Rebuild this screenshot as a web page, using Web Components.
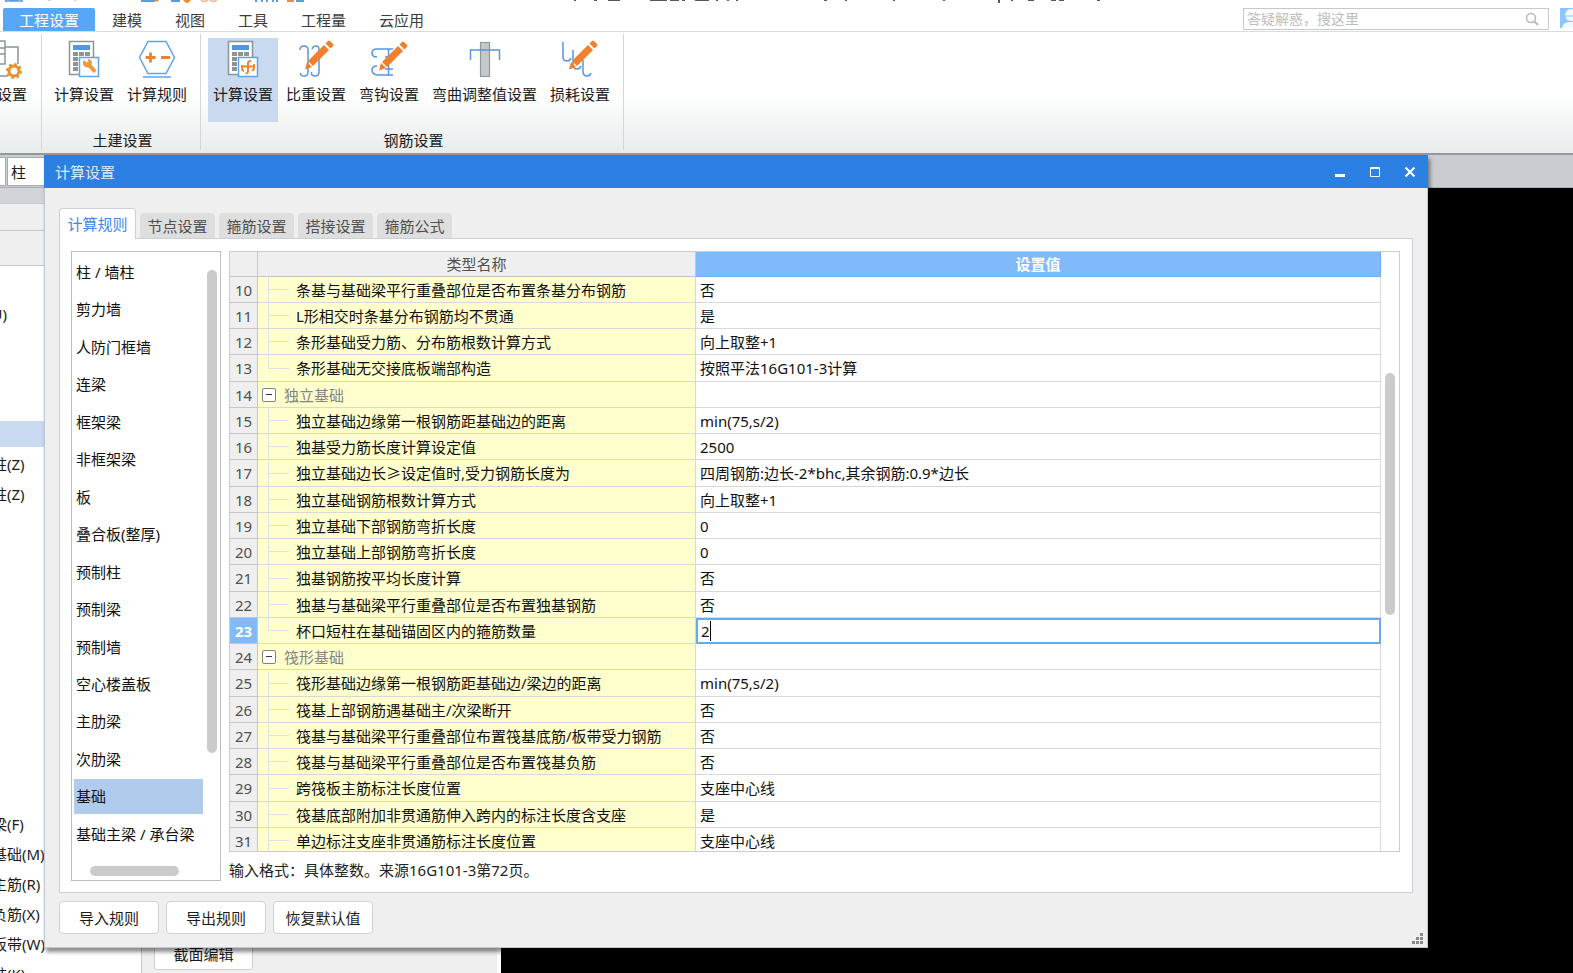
<!DOCTYPE html>
<html lang="zh-CN">
<head>
<meta charset="utf-8">
<title>计算设置</title>
<style>
  html, body { margin: 0; height: 100%; }
  body {
    font: 15px/20px "Noto Sans", "Noto Sans CJK SC", sans-serif;
    color: #1c1c1c;
    overflow: hidden;
  }
</style>
</head>
<body>
<cost-app></cost-app>
<script>
const RESET = `
  *, *::before, *::after { box-sizing: border-box; }
  button, input { font: inherit; color: inherit; margin: 0; padding: 0; border: 0; background: none; }
  button { cursor: pointer; white-space: nowrap; }
  ul { list-style: none; margin: 0; padding: 0; }
  svg { display: block; }
`;

function define(name, css, html) {
  const template = document.createElement('template');
  template.innerHTML = `<style>${RESET}${css}</style>`;
  customElements.define(name, class extends HTMLElement {
    constructor() {
      super();
      this.attachShadow({ mode: 'open' });
      this.shadowRoot.append(template.content.cloneNode(true));
    }
    connectedCallback() {
      if (this.ready) return;
      this.ready = true;
      const body = document.createElement('template');
      body.innerHTML = typeof html === 'function' ? html(this) : html;
      this.shadowRoot.append(body.content);
    }
  });
}

/* ---------- icons ---------- */
const calculator = `
  <path d="M5.500 1.500h24v33h-24z" fill="#fff" stroke="#8a9499" stroke-width="1.5"/>
  <path d="M9 5h17v5H9z" fill="#5596e0"/>
  <path d="M9 12h5v4H9zM15 12h5v4h-5zM21 12h5v4h-5zM9 17h5v4H9zM9 22h5v4H9zM9 27h5v4H9z" fill="#8a9499"/>
  <path d="M15.500 17.500h19v19h-19z" fill="#fff" stroke="#5fa3ea" stroke-width="1.5"/>`;
const pencil = `
  <g fill="#f07f2e"><path d="M24 5l5 5-16 16-5-5z"/><path d="M25.5 3.500l2.500-2.500q1-1 2 0l3 3q1 1 0 2l-2.500 2.500z"/><path d="M7 22l5 5-7 2.500z"/></g>`;
const ICONS = {
  project: `<g fill="none" stroke="#8a9499" stroke-width="1.500"><path d="M6 36h10M13 7h13v17M6 1h7v23H6M6 8h7M6 14h7"/></g>
    <circle cx="22" cy="31" r="5" fill="#fff" stroke="#e8902f" stroke-width="3"/>
    <circle cx="22" cy="31" r="7" fill="none" stroke="#e8902f" stroke-width="2" stroke-dasharray="2.700 2.800"/>`,
  wrench: calculator + `<path d="M19 22q0-2 1.500-1.500l2 2 2-1-1-2.500q4 0 4.500 3.500l-.5 2 5 6-2.500 2.500-5.500-5.500q-4 .5-5.500-3z" fill="#ee9a3c"/>`,
  rule: `<path d="M11 1.500h18l8.500 16-8.500 16H11l-8.500-16z" fill="#fff" stroke="#5fa3ea" stroke-width="1.500"/>
    <path d="M8.500 17.500h10M13.500 12.500v10M24 17.500h9" stroke="#f07f2e" stroke-width="2.800"/>
    <path d="M6 37h28" stroke="#5fa3ea" stroke-width="1.500"/>`,
  hook: calculator + `<path d="M19 26.500h12M25 22v9q0 2.500-2.500 2.500M25 23q0-2 3-2M19 25v3q0 2.500 2 3M31 24v4q0 2-2 2.500" fill="none" stroke="#f0862e" stroke-width="2"/>`,
  weight: `<path d="M4 10q0-4 4-4t4 4v22q0 4-4 4t-3.500-3M16 9q1-3 4-3t3 4v22q0 4-4 4t-3.500-4" fill="none" stroke="#5596e0" stroke-width="1.500"/>` + `<g transform="translate(4 0)">${pencil}</g>`,
  bend: `<path d="M8 17q-5 0-5-4t5-4h16M8 26q-5 0-5 4t5 5h16M19.500 9v26M16 17h8M16 29h8" fill="none" stroke="#5596e0" stroke-width="1.500"/>` + `<g transform="translate(5 1)">${pencil}</g>`,
  adjust: `<path d="M15.500 2.500h9v34h-9z" fill="#c3c8cb" stroke="#8d989c" stroke-width="1.200"/><path d="M5.500 20v-10h29v10" fill="none" stroke="#5596e0" stroke-width="1.500"/>`,
  loss: `<path d="M3 2v15q0 4 4 4 3 0 4-3M13 10v15q0 4 4 4 3 0 4-3M23 20v11q0 5 4 5 3 0 4-3" fill="none" stroke="#5596e0" stroke-width="1.500"/>` + `<g transform="translate(4 0)">${pencil}</g>`
};

/* ---------- top of the window ---------- */
define('quick-access', `
  :host { display: block; height: 8px; overflow: hidden; background: #fff; }
`, `
  <svg width="1200" height="5" viewBox="0 0 1200 5" aria-hidden="true">
    <path d="M5 1h17M6 0v2M22 0v2M9 .5h9" stroke="#5a9be4" stroke-width="1.500"/>
    <path d="M48 0h3M74 0h2" stroke="#9aa9bb" stroke-width="1"/>
    <path d="M141 1h14M171 1h9M256 0v2M262 0v2M267 0v2M273 0v2M277 0v2M296 1h8" stroke="#5a9be4" stroke-width="2"/>
    <path d="M154 0h5l-2 2zM183 0h8l-3 3h-2zM287 0h7v2h-7z" fill="#f08a2c"/>
    <path d="M201 0q3 3 7 0M210 0q3 3 7 0" fill="none" stroke="#f3b38a" stroke-width="1.500"/>
    <path d="M575 0v1M594 0h3M608 0h12M650 0h17M670 0h9M682 0h3M695 0h14M717 0v1M728 0v1M737 0v1M824 0h3M845 0h2M893 0h2M943 0h2M999 0v3M1011 0h2M1028 0h6M1051 0h5M1059 0h5M1097 0h3" stroke="#222" stroke-width="1.500"/>
  </svg>`);

define('ribbon-tabs', `
  :host { display: flex; height: 24px; align-items: stretch; border-bottom: 1px solid #dcdcdc; background: #fff; }
  nav { display: flex; gap: 1px; margin-left: 3px; flex: 1; }
  button { padding: 0 16px; color: #3c3c3c; }
  button[aria-selected=true] { background: #57a7f9; color: #fff; border-radius: 2px 2px 0 0; }
  label { display: flex; align-items: center; width: 306px; height: 22px; margin-right: 11px; border: 1px solid #c8c8c8; padding: 0 9px 0 3px; }
  input { flex: 1; min-width: 0; font-size: 14px; outline: 0; }
  input::placeholder { color: #bdbdbd; opacity: 1; }
`, `
  <nav role="tablist">
    ${['工程设置', '建模', '视图', '工具', '工程量', '云应用'].map((t, i) => `<button role="tab" aria-selected="${i === 0}">${t}</button>`).join('')}
  </nav>
  <label>
    <input type="text" aria-label="搜索" placeholder="答疑解惑，搜这里">
    <svg width="14" height="14" viewBox="0 0 14 14" fill="none" stroke="#b8b8b8"><circle cx="6" cy="6" r="4.500" stroke-width="1.500"/><path d="M9 9l4 4" stroke-width="2"/></svg>
  </label>
  <svg width="13" height="21" viewBox="0 0 13 21" aria-hidden="true"><path d="M0 0h13v20H0z" fill="#8ec5fb"/><circle cx="11" cy="7" r="6" fill="#f2f8ff"/><path d="M2 20q1-6 7-6h4v6z" fill="#f2f8ff"/><path d="M5 8h8" stroke="#8ec5fb"/></svg>`);

define('tool-button', `
  :host { display: block; }
  button { display: flex; flex-direction: column; align-items: center; height: 84px; padding: 2px 5px 0; gap: 4px; }
  :host([active]) button { background: #c9d9ef; }
`, el => `<button><svg width="40" height="40" viewBox="0 0 40 40">${ICONS[el.getAttribute('icon')]}</svg><span><slot></slot></span></button>`);

define('ribbon-group', `
  :host { display: flex; flex-direction: column; border-right: 1px solid #d3d6d8; padding: 0 8px 0 7px; margin: 2px 0 3px; }
  .tools { display: flex; gap: 3px; flex: 1; padding-top: 4px; }
  .title { text-align: center; padding-left: 4px; }
`, el => `<div class="tools"><slot></slot></div><div class="title">${el.getAttribute('label')}</div>`);

define('ribbon-panel', `
  :host { display: flex; height: 123px; background: linear-gradient(#fff 50%, #e8ecec); border-bottom: 2px solid #94989b; }
  .clipped { width: 42px; margin: 2px 0 3px; border-right: 1px solid #d3d6d8; overflow: hidden; }
  .clipped tool-button { padding-top: 4px; margin-left: -13px; }
`, `
  <div class="clipped"><tool-button icon="project">设置</tool-button></div>
  <ribbon-group label="土建设置">
    <tool-button icon="wrench">计算设置</tool-button>
    <tool-button icon="rule">计算规则</tool-button>
  </ribbon-group>
  <ribbon-group label="钢筋设置">
    <tool-button icon="hook" active>计算设置</tool-button>
    <tool-button icon="weight">比重设置</tool-button>
    <tool-button icon="bend">弯钩设置</tool-button>
    <tool-button icon="adjust">弯曲调整值设置</tool-button>
    <tool-button icon="loss">损耗设置</tool-button>
  </ribbon-group>`);

/* ---------- workspace behind the dialog ---------- */
define('component-tree', `
  :host { display: flex; flex-direction: column; width: 142px; background: #fff; border-right: 1px solid #c4c8cc; overflow: hidden; }
  .bar { flex: none; background: #efefef; border-bottom: 1px solid #c4c8cc; }
  .top { height: 16px; background: #d2d4d9; }
  .mid { height: 27px; }
  .low { height: 35px; margin-bottom: 33px; }
  ul { flex: 1; min-height: 0; overflow: hidden; }
  li { display: flex; align-items: center; height: 30px; white-space: nowrap; }
  li span { margin-left: -8px; }
  li:first-child span { margin-left: -13px; }
  .on { height: 26px; margin: 2px 0; background: #c9d9ef; }
`, () => {
  const items = ['(U)', '', '', '', '#', '柱(Z)', '柱(Z)', '', '', '', '', '', '', '', '', '', '', '梁(F)', '基础(M)', '主筋(R)', '负筋(X)', '板带(W)', '柱(K)'];
  return `<div class="bar top"></div><div class="bar mid"></div><div class="bar low"></div>
    <ul>${items.map(t => t === '#' ? '<li class="on"></li>' : `<li><span>${t}</span></li>`).join('')}</ul>`;
});

define('work-space', `
  :host { display: flex; flex-direction: column; flex: 1; min-height: 0; }
  .strip { display: flex; flex: none; height: 33px; background: #c9ccd1; border-bottom: 1px solid #a8abb0; }
  .box { background: #fff; border: 1px solid #a8abb0; border-left: 0; width: 6px; margin: 2px 0 1px; }
  .type { width: 130px; margin-left: 1px; border-left: 1px solid #a8abb0; padding: 4px 3px; }
  .main { display: flex; flex: 1; min-height: 0; background: #000; }
  .props { display: flex; align-items: flex-end; width: 359px; background: #efefef; border-right: 4px solid #fff; padding: 0 0 3px 12px; }
  .props button { width: 99px; height: 32px; background: #fff; border: 1px solid #cfcfcf; border-radius: 3px; }
`, `
  <div class="strip"><div class="box"></div><div class="box type">柱</div></div>
  <div class="main">
    <component-tree></component-tree>
    <div class="props"><button>截面编辑</button></div>
  </div>`);

/* ---------- dialog ---------- */
define('category-list', `
  :host { display: flex; flex-direction: column; width: 150px; border: 1px solid #bdbdbd; background: #fff; padding: 3px 3px 3px 2px; }
  .body { display: flex; flex: 1; min-height: 0; justify-content: space-between; }
  ul { display: flex; flex-direction: column; justify-content: space-between; width: 129px; }
  li { height: 35px; padding: 7px 2px; white-space: nowrap; color: #111; }
  li[aria-selected=true] { background: #b1cbec; }
  .v { width: 10px; margin: 15px 0 99px; border-radius: 5px; background: #cbcbcb; }
  .h { width: 89px; height: 10px; margin: 14px 0 1px 16px; border-radius: 5px; background: #cbcbcb; }
`, () => {
  const names = ['柱 / 墙柱', '剪力墙', '人防门框墙', '连梁', '框架梁', '非框架梁', '板', '叠合板(整厚)', '预制柱', '预制梁', '预制墙', '空心楼盖板', '主肋梁', '次肋梁', '基础', '基础主梁 / 承台梁'];
  return `<div class="body"><ul role="listbox">${names.map(n => `<li role="option" aria-selected="${n === '基础'}">${n}</li>`).join('')}</ul><div class="v"></div></div><div class="h"></div>`;
});

const ROWS = [
  [10, '条基与基础梁平行重叠部位是否布置条基分布钢筋', '否'],
  [11, 'L形相交时条基分布钢筋均不贯通', '是'],
  [12, '条形基础受力筋、分布筋根数计算方式', '向上取整+1'],
  [13, '条形基础无交接底板端部构造', '按照平法16G101-3计算', 'last'],
  [14, '独立基础', '', 'group'],
  [15, '独立基础边缘第一根钢筋距基础边的距离', 'min(75,s/2)'],
  [16, '独基受力筋长度计算设定值', '2500'],
  [17, '独立基础边长≥设定值时,受力钢筋长度为', '四周钢筋:边长-2*bhc,其余钢筋:0.9*边长'],
  [18, '独立基础钢筋根数计算方式', '向上取整+1'],
  [19, '独立基础下部钢筋弯折长度', '0'],
  [20, '独立基础上部钢筋弯折长度', '0'],
  [21, '独基钢筋按平均长度计算', '否'],
  [22, '独基与基础梁平行重叠部位是否布置独基钢筋', '否'],
  [23, '杯口短柱在基础锚固区内的箍筋数量', '2', 'last edit'],
  [24, '筏形基础', '', 'group'],
  [25, '筏形基础边缘第一根钢筋距基础边/梁边的距离', 'min(75,s/2)'],
  [26, '筏基上部钢筋遇基础主/次梁断开', '否'],
  [27, '筏基与基础梁平行重叠部位布置筏基底筋/板带受力钢筋', '否'],
  [28, '筏基与基础梁平行重叠部位是否布置筏基负筋', '否'],
  [29, '跨筏板主筋标注长度位置', '支座中心线'],
  [30, '筏基底部附加非贯通筋伸入跨内的标注长度含支座', '是'],
  [31, '单边标注支座非贯通筋标注长度位置', '支座中心线']
];

define('rule-table', `
  :host { display: flex; align-items: flex-start; border: 1px solid #cdcdcd; background: #fff; overflow: hidden; }
  table { flex: 1; width: 0; table-layout: fixed; border-collapse: separate; border-spacing: 0; }
  th, td { padding: 0; border: 0 solid #d8d8d8; border-width: 0 1px 1px 0; height: 26px; font-weight: 400; text-align: left; white-space: nowrap; overflow: hidden; }
  tbody tr:nth-child(4n) > * { height: 27px; }
  thead th { height: 25px; background: #efefef; color: #505050; text-align: center; border-color: #c6c6c6; }
  thead .set { background: #80bafa; color: #fff; font-weight: 700; border-color: #6caef4; }
  tbody th { background: #efefef; color: #505050; text-align: center; border-color: #c6c6c6; }
  .name { background: #feffcc; color: #111; }
  .val { padding-left: 4px; color: #111; }
  .edit th { background: #80bafa; color: #fff; font-weight: 700; }
  .cell { display: flex; align-items: center; height: 25px; }
  .guide { display: grid; grid-template-rows: 13px 12px; align-self: stretch; width: 21px; margin: 0 7px 0 10px; }
  .guide i { border-left: 1px solid #dfdfe4; }
  .guide i:first-child { border-bottom: 1px solid #dfdfe4; }
  .last .guide i:last-child { border: 0; }
  .group .name { color: #848484; }
  .toggle { display: grid; place-items: center; width: 14px; height: 14px; margin: 0 8px 0 4px; background: #fff; border: 1px solid #808080; border-radius: 2px; }
  .toggle::before { content: ""; width: 6px; height: 1px; background: #333; }
  .edit .val { padding: 0; border: 0; }
  .edit input { display: block; width: 100%; height: 26px; border: 2px solid #68aaea; padding: 0 3px; outline: 0; background: linear-gradient(#000, #000) 12px center / 1px 20px no-repeat; }
  .bar { width: 10px; height: 242px; margin: 121px 4px 0; border-radius: 5px; background: #cbcbcb; }
`, () => `
  <table>
    <colgroup><col style="width:28px"><col style="width:438px"><col></colgroup>
    <thead><tr><th></th><th scope="col">类型名称</th><th scope="col" class="set">设置值</th></tr></thead>
    <tbody>${ROWS.map(([n, name, val, cls = '']) => `
      <tr class="${cls}"><th scope="row">${n}</th>
        <td class="name"><div class="cell">${cls === 'group' ? '<button class="toggle" aria-label="折叠"></button>' : '<span class="guide"><i></i><i></i></span>'}<span>${name}</span></div></td>
        <td class="val">${cls.includes('edit') ? `<input type="text" aria-label="${name}" value="${val}">` : val}</td></tr>`).join('')}
    </tbody>
  </table>
  <div class="bar"></div>`);

define('calc-dialog', `
  :host { display: flex; flex-direction: column; background: #efefef; border: 1px solid #bfc7d6; border-top: 0; box-shadow: 2px 4px 4px rgba(0,0,0,.45); }
  header { display: flex; align-items: center; height: 33px; margin: 0 -1px; padding: 0 1px 0 11px; background: #2d80e3; color: #dcebff; }
  h1 { flex: 1; margin: 0; font: inherit; }
  header button { display: grid; place-items: center; width: 35px; height: 33px; color: #fff; }
  .tabs { display: flex; align-items: flex-end; gap: 4px; height: 51px; margin: 0 14px -1px; z-index: 1; }
  .tabs button { width: 75px; height: 25px; margin-bottom: 1px; background: #dedede; color: #505050; border-radius: 4px 4px 0 0; }
  .tabs button[aria-selected=true] { width: 77px; height: 31px; margin: 0; background: #fff; color: #3c8ae8; border: 1px solid #cbd0d8; border-bottom: 0; }
  .panel { display: flex; gap: 8px; flex: 1; min-height: 0; margin: 0 14px; padding: 12px 12px 11px 11px; background: #fff; border: 1px solid #cbd0d8; }
  .right { display: flex; flex-direction: column; flex: 1; min-width: 0; }
  rule-table { flex: 1; min-height: 0; }
  p { margin: 0; padding: 8px 0 0; height: 29px; color: #222; }
  footer { display: flex; gap: 7px; padding: 8px 14px 13px; height: 54px; }
  footer button { width: 100px; height: 33px; background: #fff; border: 1px solid #d0d0d0; border-radius: 4px; }
  .grip { align-self: flex-end; margin: 0 -10px -10px auto; }
`, `
  <header><h1>计算设置</h1>
    <button aria-label="最小化"><svg width="12" height="12" viewBox="0 0 12 12"><path d="M1 8h10v3H1z" fill="currentColor"/></svg></button>
    <button aria-label="最大化"><svg width="12" height="12" viewBox="0 0 12 12" fill="none" stroke="currentColor"><path d="M1.500 1.500h9v9h-9zM1 2.500h10"/></svg></button>
    <button aria-label="关闭"><svg width="12" height="12" viewBox="0 0 12 12" stroke="currentColor" stroke-width="2"><path d="M1.500 1.500l9 9M10.500 1.500l-9 9"/></svg></button>
  </header>
  <div class="tabs" role="tablist">
    ${['计算规则', '节点设置', '箍筋设置', '搭接设置', '箍筋公式'].map((t, i) => `<button role="tab" aria-selected="${i === 0}">${t}</button>`).join('')}
  </div>
  <div class="panel">
    <category-list></category-list>
    <div class="right"><rule-table></rule-table><p>输入格式：具体整数。来源16G101-3第72页。</p></div>
  </div>
  <footer>
    <button>导入规则</button><button>导出规则</button><button>恢复默认值</button>
    <svg class="grip" width="11" height="11" viewBox="0 0 11 11"><path d="M8 0h3v3H8zM4 4h3v3H4zM8 4h3v3H8zM0 8h3v3H0zM4 8h3v3H4zM8 8h3v3H8z" fill="#85878c"/></svg>
  </footer>`);

define('cost-app', `
  :host { display: flex; flex-direction: column; height: 100vh; position: relative; overflow: hidden; }
  calc-dialog { position: absolute; left: 44px; right: 145px; top: 155px; bottom: 25px; }
`, `
  <quick-access></quick-access>
  <ribbon-tabs></ribbon-tabs>
  <ribbon-panel></ribbon-panel>
  <work-space></work-space>
  <calc-dialog></calc-dialog>`);
</script>
</body>
</html>
